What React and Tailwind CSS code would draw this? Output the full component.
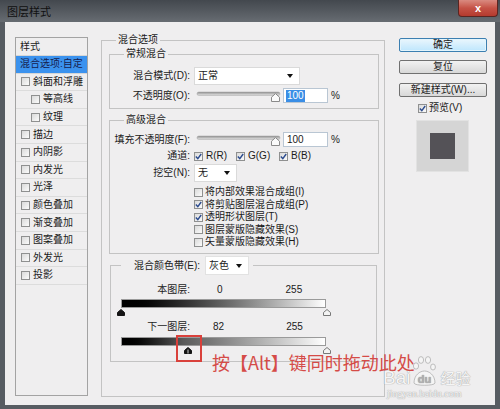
import React from "react";

const Check = ({ checked }) => (
  <span className="w-[9px] h-[9px] shrink-0 border border-[#8f9090] bg-linear-to-br from-[#dadada] to-[#fbfbfb] flex items-center justify-center">
    {checked && (
      <svg width="7" height="7" viewBox="0 0 7 7">
        <path d="M0.8 3.6 L2.8 5.6 L6.2 1" stroke="#2d4c8f" strokeWidth="1.4" fill="none" />
      </svg>
    )}
  </span>
);

const Arrow = () => (
  <svg width="6" height="4" viewBox="0 0 6 4">
    <path d="M0 0h6L3 4z" fill="#111" />
  </svg>
);

const Slider = () => (
  <svg width="86" height="14" viewBox="0 0 86 14" className="shrink-0">
    <defs>
      <linearGradient id="trk" x1="0" y1="0" x2="0" y2="1">
        <stop offset="0" stopColor="#8e8e8e" />
        <stop offset="1" stopColor="#e6e6e6" />
      </linearGradient>
    </defs>
    <rect x="1" y="3" width="83" height="3.5" rx="1.75" fill="url(#trk)" stroke="#a3a3a3" strokeWidth="0.5" />
    <path d="M75.5 12.5 V8.2 L79.5 4.6 L83.5 8.2 V12.5 Z" fill="#fafafa" stroke="#8a8a8a" />
  </svg>
);

const Thumb = ({ kind, left }) => (
  <svg width="8" height="7" viewBox="0 0 8 7" className="absolute top-[1px]" style={{ left }}>
    <path
      d="M0.5 6.5 V3.5 L4 0.5 L7.5 3.5 V6.5 Z"
      fill={kind === "white" ? "#f3f3f3" : "#141414"}
      stroke={kind === "white" ? "#777" : "#141414"}
    />
    {kind === "split" && <path d="M4 2.5 V6.5" stroke="#fff" strokeWidth="0.8" />}
  </svg>
);

const effects = [
  ["斜面和浮雕", false],
  ["等高线", true],
  ["纹理", true],
  ["描边", false],
  ["内阴影", false],
  ["内发光", false],
  ["光泽", false],
  ["颜色叠加", false],
  ["渐变叠加", false],
  ["图案叠加", false],
  ["外发光", false],
  ["投影", false],
];

const options = [
  ["将内部效果混合成组(I)", false],
  ["将剪贴图层混合成组(P)", true],
  ["透明形状图层(T)", true],
  ["图层蒙版隐藏效果(S)", false],
  ["矢量蒙版隐藏效果(H)", false],
];

function App() {
  return (
    <div className="w-[500px] h-[409px] bg-[#575c62] flex flex-col text-[10px] leading-[12px] text-[#1b1b1b] font-['Liberation_Sans','Noto_Sans_CJK_SC',sans-serif]">
      {/* title bar */}
      <div className="h-[22px] shrink-0 flex items-start justify-between bg-linear-to-b from-[#43484e] to-[#676c72]">
        <div className="pl-[7px] pt-[6px] text-[11px] text-[#101010]">图层样式</div>
        <div className="w-[40px] h-[17px] mr-[2px] rounded-b-[4px] border border-t-0 border-[#5b2521] bg-linear-to-b from-[#d98a80] via-[#c55246] to-[#b43a2e] flex items-center justify-center text-white text-[11px] font-bold">
          x
        </div>
      </div>

      {/* body */}
      <div className="flex-1 mx-[5px] mb-[4px] bg-[#efeeef] relative flex items-start pl-[10px] pt-[12px]">
        {/* effects list */}
        <div className="w-[73px] h-[359px] mt-[3px] border border-[#a3a3a3] flex flex-col">
          <div className="h-[18px] border-b border-[#d6d6d6] pl-[4px] flex items-center">样式</div>
          <div className="h-[17.6px] bg-[#3b92ee] text-[#16204d] pl-[4px] flex items-center border-b border-[#d6d6d6]">
            混合选项:自定
          </div>
          {effects.map(([name, indent]) => (
            <div
              key={name}
              className={`h-[17.6px] border-b border-[#dcdcdc] flex items-center gap-[3px] ${indent ? "pl-[15px]" : "pl-[5px]"}`}
            >
              <Check />
              <span>{name}</span>
            </div>
          ))}
        </div>

        {/* blending options */}
        <fieldset className="w-[284px] h-[363px] ml-[13px] border border-[#c3c3c3]">
          <legend className="ml-[14px] px-[2px] leading-[12px]">混合选项</legend>

          {/* general blending */}
          <fieldset className="w-[270px] h-[61px] ml-[7px] mt-[2px] border border-[#c3c3c3]">
            <legend className="ml-[14px] px-[2px] leading-[12px]">常规混合</legend>
            <div className="flex items-center mt-[7px]">
              <span className="w-[80px] text-right">混合模式(D):</span>
              <div className="w-[106px] h-[18px] ml-[4px] bg-white border border-[#dadada] flex items-center justify-between pl-[3px] pr-[6px]">
                <span>正常</span>
                <Arrow />
              </div>
            </div>
            <div className="flex items-center mt-[3px]">
              <span className="w-[80px] text-right">不透明度(O):</span>
              <span className="ml-[6px]">
                <Slider />
              </span>
              <div className="w-[45px] h-[15px] ml-[1px] bg-white border border-[#b9c6d3] flex items-center pl-[2px]">
                <span className="bg-[#3a8ee6] text-white px-[1px]">100</span>
              </div>
              <span className="ml-[3px]">%</span>
            </div>
          </fieldset>

          {/* advanced blending */}
          <fieldset className="w-[270px] h-[140px] ml-[7px] mt-[5px] border border-[#c3c3c3]">
            <legend className="ml-[14px] px-[2px] leading-[12px]">高级混合</legend>
            <div className="flex items-center mt-[6px]">
              <span className="w-[80px] text-right">填充不透明度(F):</span>
              <span className="ml-[6px]">
                <Slider />
              </span>
              <div className="w-[45px] h-[15px] ml-[1px] bg-white border border-[#b9c6d3] flex items-center pl-[3px]">
                100
              </div>
              <span className="ml-[3px]">%</span>
            </div>
            <div className="h-[14px] flex items-center mt-[2px]">
              <span className="w-[80px] text-right">通道:</span>
              <div className="w-[42px] ml-[4px] flex items-center gap-[3px]">
                <Check checked />
                <span>R(R)</span>
              </div>
              <div className="w-[43px] flex items-center gap-[3px]">
                <Check checked />
                <span>G(G)</span>
              </div>
              <div className="flex items-center gap-[3px]">
                <Check checked />
                <span>B(B)</span>
              </div>
            </div>
            <div className="flex items-center mt-[1px]">
              <span className="w-[80px] text-right">挖空(N):</span>
              <div className="w-[43px] h-[18px] ml-[4px] bg-white border border-[#dadada] flex items-center justify-between pl-[3px] pr-[6px]">
                <span>无</span>
                <Arrow />
              </div>
            </div>
            <div className="mt-[4px] ml-[84px] flex flex-col">
              {options.map(([label, on]) => (
                <div key={label} className="h-[12.5px] flex items-center gap-[2px]">
                  <Check checked={on} />
                  <span>{label}</span>
                </div>
              ))}
            </div>
          </fieldset>

          {/* blend if */}
          <fieldset className="w-[267px] h-[106px] ml-[8px] mt-[2px] border border-[#c3c3c3]">
            <legend className="ml-[10px] pr-[4px] flex items-center">
              <span className="w-[79px] text-right">混合颜色带(E):</span>
              <div className="w-[44px] h-[19px] ml-[5px] bg-white border border-[#e2e2e2] flex items-center justify-between pl-[3px] pr-[6px]">
                <span>灰色</span>
                <Arrow />
              </div>
            </legend>
            <div className="flex items-center mt-[9px]">
              <span className="w-[79px] text-right">本图层:</span>
              <span className="ml-[27px]">0</span>
              <span className="ml-[63px]">255</span>
            </div>
            <div className="w-[205px] h-[9px] ml-[10px] mt-[3px] border border-[#9a9a9a] bg-linear-to-r from-black to-white" />
            <div className="relative w-[213px] h-[8px] ml-[6px]">
              <Thumb kind="black" left={0} />
              <Thumb kind="white" left={206} />
            </div>
            <div className="flex items-center mt-[5px]">
              <span className="w-[79px] text-right">下一图层:</span>
              <span className="ml-[23px]">82</span>
              <span className="ml-[62px]">255</span>
            </div>
            <div className="w-[205px] h-[9px] ml-[10px] mt-[4px] border border-[#9a9a9a] bg-linear-to-r from-black via-[#5a5a5a] via-30% to-white" />
            <div className="relative w-[213px] h-[8px] ml-[6px]">
              <Thumb kind="split" left={67} />
              <Thumb kind="white" left={206} />
            </div>
          </fieldset>
        </fieldset>

        {/* buttons */}
        <div className="w-[88px] ml-[14px] mt-[4px] flex flex-col">
          <div className="h-[14px] rounded-[2px] border border-[#3c7fb1] bg-linear-to-b from-[#eaf6fd] to-[#bee6fd] shadow-[inset_0_0_0_1px_#e3f4fc] flex items-center justify-center">
            确定
          </div>
          <div className="h-[14px] mt-[8px] rounded-[2px] border border-[#707070] bg-linear-to-b from-[#f2f2f2] to-[#d8d8d8] flex items-center justify-center">
            复位
          </div>
          <div className="h-[14px] mt-[9px] rounded-[2px] border border-[#707070] bg-linear-to-b from-[#f2f2f2] to-[#d8d8d8] flex items-center justify-center">
            新建样式(W)...
          </div>
          <div className="h-[12px] mt-[5px] pl-[19px] flex items-center gap-[2px]">
            <Check checked />
            <span>预览(V)</span>
          </div>
          <div className="w-[53px] h-[52px] mt-[6px] ml-[17px] bg-[#d5d5d5] border border-[#e2e2e2] flex items-center justify-center">
            <div className="w-[25px] h-[26px] bg-[#545257]" />
          </div>
        </div>

        {/* annotation */}
        <div className="absolute left-[171px] top-[313px] w-[26px] h-[27px] border-2 border-[#d9403b]" />
        <div className="absolute left-[207px] top-[330px] text-[18px] leading-[21px] text-[#d54b47] font-['Noto_Sans_CJK_SC',sans-serif] whitespace-nowrap">
          按【Alt】键同时拖动此处
        </div>

        {/* watermark */}
        <div className="absolute left-[378px] top-[333px] flex flex-col items-start text-[#f7f7f7] [text-shadow:0_0_1px_#9a9a9a,0_0_1px_#9a9a9a] opacity-85">
          <div className="flex items-end">
            <span className="text-[19px] leading-[16px] font-['Liberation_Sans',sans-serif]">Bai</span>
            <svg width="27" height="31" viewBox="0 0 27 31" className="ml-[1px]">
              <g fill="#f7f7f7" stroke="#a5a5a5" strokeWidth="0.8">
                <ellipse cx="5" cy="11" rx="2.6" ry="3.2" />
                <ellipse cx="10" cy="5" rx="2.6" ry="3.4" />
                <ellipse cx="17" cy="5" rx="2.6" ry="3.4" />
                <ellipse cx="22" cy="12" rx="2.4" ry="3" />
                <path d="M3 28 C3 20 9 16 13.5 16 C18 16 24 20 24 28 C24 31 3 31 3 28 Z" />
              </g>
              <text x="13.5" y="28" textAnchor="middle" fontSize="11" fontWeight="bold" fontFamily="Liberation Sans, sans-serif" fill="#a5a5a5">du</text>
            </svg>
            <span className="text-[15px] leading-[16px] ml-[2px] font-['Noto_Sans_CJK_SC',sans-serif]">经验</span>
          </div>
          <div className="text-[10px] leading-[11px] mt-[2px] ml-[4px] font-['Liberation_Serif',serif]">jingyan.baidu.com</div>
        </div>
      </div>
    </div>
  );
}

export default App;
